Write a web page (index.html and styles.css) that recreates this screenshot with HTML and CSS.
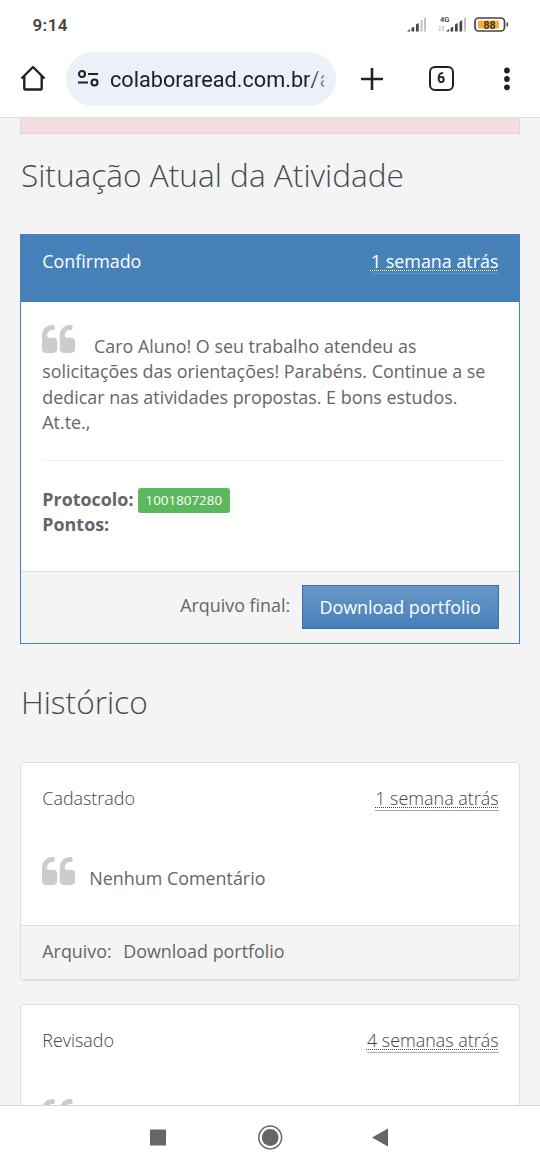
FILE: index.html
```html
<!DOCTYPE html>
<html lang="pt-BR">
<head>
<meta charset="utf-8">
<title>Situação Atual da Atividade</title>
<link rel="stylesheet" href="styles.css">
</head>
<body>
<svg class="defs" width="0" height="0">
  <symbol id="quote" viewBox="0 128 1664 1408">
    <path id="mark" d="M768 960v384q0 80-56 136t-136 56h-384q-80 0-136-56t-56-136v-704q0-104 40.500-198.500t109.500-163.500 163.500-109.500 198.500-40.500h64q26 0 45 19t19 45v128q0 26-19 45t-45 19h-64q-106 0-181 75t-75 181v32q0 40 28 68t68 28h224q80 0 136 56t56 136z"/>
    <use href="#mark" x="896"/>
  </symbol>
</svg>
<div class="screen">
  <header class="status">
    <span class="clock">9:14</span>
    <svg class="indicators" width="104" height="24" viewBox="0 0 104 24">
      <g fill="#444">
        <path d="M1 20.500l3-2.500v2.500zM5.500 17l2.700-1.500v5h-2.700zM10 13.500l2.700-1.500v8.500h-2.700z"/>
        <path d="M40 20.500l3-2.500v2.500zM44.500 17l2.700-1.500v5h-2.700zM49 13.500l2.700-1.500v8.500h-2.700zM53.500 11l2.700-2v11.500h-2.700z"/>
      </g>
      <path fill="#c2c2c2" d="M14.500 10l2-1.500v12h-2zM18 7.500l2-1.500v14.500h-2zM58 7.500l2-1.500v14.500h-2z"/>
      <path fill="none" stroke="#aaa" stroke-width=".8" d="M34 15v5l-1.500-1.500M37 20v-5l1.500 1.500"/>
      <text class="net" x="34" y="11">4G</text>
      <rect x="69" y="7" width="29.500" height="13" rx="3.500" fill="#fff" stroke="#444" stroke-width="1.700"/>
      <rect x="72" y="9.500" width="21" height="8" rx="1" fill="#f1ad43"/>
      <path fill="#444" d="M100.500 11.500h1.500v4h-1.500z"/>
      <text class="charge" x="83.500" y="17.600" text-anchor="middle">88</text>
    </svg>
  </header>
  <nav class="toolbar">
    <svg class="home" width="26" height="28" viewBox="0 0 26 28" fill="none" stroke="#202124" stroke-width="2.400">
      <path d="M1.500 14.500L13 3l11.500 11.500" stroke-linejoin="round"/><path d="M4.300 12v12.500q0 1 1 1h15.400q1 0 1-1v-12.500"/>
    </svg>
    <div class="address">
      <svg width="22" height="20" viewBox="0 0 22 20" fill="none" stroke="#202124" stroke-width="2.100">
        <circle cx="5" cy="5" r="3"/><path d="M11 5h10M1 13.500h10"/><circle cx="17.500" cy="13.500" r="3"/>
      </svg>
      <span class="url">colaboraread.com.br/a</span>
    </div>
    <svg class="plus" width="24" height="24" viewBox="0 0 24 24" stroke="#202124" stroke-width="2.600"><path d="M1 12h22M12 1v22"/></svg>
    <span class="tabs">6</span>
    <svg class="more" width="8" height="24" viewBox="0 0 8 24" fill="#202124"><circle cx="4" cy="3.500" r="2.900"/><circle cx="4" cy="12" r="2.900"/><circle cx="4" cy="20.300" r="2.900"/></svg>
  </nav>
  <main class="page">
    <div class="alert"></div>
    <h1 class="title">Situação Atual da Atividade</h1>
    <section class="panel current">
      <div class="head"><span>Confirmado</span><abbr class="time">1 semana atrás</abbr></div>
      <div class="body">
        <p class="comment"><svg class="quote"><use href="#quote"/></svg>Caro Aluno! O seu trabalho atendeu as solicitações das orientações! Parabéns. Continue a se dedicar nas atividades propostas. E bons estudos. At.te.,</p>
        <hr class="rule">
        <div class="facts"><b>Protocolo:</b><span class="label">1001807280</span></div>
        <div class="facts"><b>Pontos:</b></div>
      </div>
      <div class="foot"><span>Arquivo final:</span><a class="button">Download portfolio</a></div>
    </section>
    <h2 class="title second">Histórico</h2>
    <section class="panel past">
      <div class="head"><span>Cadastrado</span><abbr class="time">1 semana atrás</abbr></div>
      <p class="comment none"><svg class="quote"><use href="#quote"/></svg>Nenhum Comentário</p>
      <div class="foot"><span>Arquivo:</span><a>Download portfolio</a></div>
    </section>
    <section class="panel past">
      <div class="head"><span>Revisado</span><abbr class="time">4 semanas atrás</abbr></div>
      <p class="comment none"><svg class="quote"><use href="#quote"/></svg></p>
    </section>
  </main>
  <footer class="system">
    <svg width="240" height="26" viewBox="0 0 240 26" fill="#666">
      <rect x="0" y="5.500" width="16" height="16" rx=".6"/>
      <circle cx="120.200" cy="13.500" r="11.400" fill="#fff" stroke="#666" stroke-width="1.500"/><circle cx="120.200" cy="13.500" r="8.400"/>
      <path d="M222 13.500l16-9v18z"/>
    </svg>
  </footer>
</div>
</body>
</html>
```
FILE: styles.css
```css
* { box-sizing: border-box; }
body { margin: 0; background: #fff; font: 17.9px/25.6px "Open Sans", sans-serif; color: #666; }
.defs { position: absolute; }
.screen { width: 540px; height: 1170px; display: flex; flex-direction: column; overflow: hidden; }
.status { height: 52px; flex: none; display: flex; justify-content: space-between; padding: 11px 30px 0 32.5px; font-family: Roboto, sans-serif; }
.clock { font-size: 17px; line-height: 28px; font-weight: 600; letter-spacing: .4px; color: #444; }
.net { font: 500 7.5px Roboto, sans-serif; fill: #333; }
.charge { font: 700 10.5px Roboto, sans-serif; fill: #4b3510; }
.toolbar { height: 65px; flex: none; display: flex; align-items: flex-start; padding-left: 20px; font-family: Roboto, sans-serif; color: #202124; }
.home { margin-top: 12px; }
.address { width: 270px; height: 54px; margin-left: 20px; border-radius: 27px; background: #ebf0f9; display: flex; align-items: center; padding-left: 11px; }
.url { width: 218px; margin: 2px 0 0 11px; white-space: nowrap; font-size: 21.7px; line-height: 30px; -webkit-mask-image: linear-gradient(90deg, #000 90%, rgba(0,0,0,.45) 98%, transparent 98.5%); }
.plus { margin: 15px 0 0 24px; }
.tabs { width: 25px; height: 25px; margin: 14px 0 0 44.5px; border: 2.5px solid #202124; border-radius: 6px; text-align: center; font-size: 14px; font-weight: 700; line-height: 21px; }
.more { margin: 15px 0 0 49px; }
.page { flex: 1; min-height: 0; overflow: hidden; background: #f4f4f4; border-top: 1px solid #ddd; padding: 0 20px; }
.alert { height: 16px; background: #f2dede; border: 1px solid #e8d0d3; border-top: 0; }
.title { margin: 19px 0 38px 1px; font-size: 31.6px; line-height: 43px; font-weight: 300; color: #484b52; }
.second { margin: 36px 0 39px 1px; }
.panel { background: #fff; border: 1px solid #ddd; }
.head { display: flex; justify-content: space-between; }
.time { text-decoration: underline dotted 1.2px; text-decoration-skip-ink: none; text-underline-offset: 2px; border-bottom: 1px solid #aaa; height: 25px; }
.current { border-color: #4781ba; }
.current .head { height: 67px; background: #4781ba; color: #fff; padding: 14px 20.5px 0 21.3px; }
.current .time { border-color: #6393c3; }
.body { height: 269px; padding: 22.5px 16px 0 21.3px; }
.comment { margin: 0; }
.quote { width: 33px; height: 28px; margin-right: 18.7px; fill: #ccc; vertical-align: baseline; }
.rule { margin: 24.5px 0 25.2px; border: 0; border-top: 1px solid #eee; }
.facts { display: flex; height: 25.6px; }
.label { margin: 1px 0 0 4px; height: 25px; padding: 0 8px; border-radius: 3px; background: #5cb85c; color: #fff; font-size: 13.4px; line-height: 24px; }
.foot { border-top: 1px solid #ddd; background: #f4f4f4; display: flex; align-items: center; }
.current .foot { height: 72px; padding: 0 20.5px; justify-content: flex-end; gap: 11.5px; }
.current .foot span { margin-top: -4px; }
.button { height: 44px; margin-top: -1px; padding: 0 16.700px; border: 1px solid #3b6fa3; background: linear-gradient(#6797c7, #4781ba); color: #fff; line-height: 42px; }
.past { height: 218px; border-radius: 4px; box-shadow: 0 1px 1px rgba(0,0,0,.06); margin-bottom: 24px; overflow: hidden; }
.past .head { height: 94px; padding: 23px 20.5px 0 21.3px; font-weight: 300; color: #444; }
.none { height: 68px; padding-left: 21.3px; }
.none .quote { margin-right: 14px; }
.past .foot { height: 54px; padding: 0 21.3px 2px; gap: 11.5px; }
.system { flex: none; height: 65px; border-top: 1px solid #d7d7d7; display: flex; justify-content: center; padding-top: 18px; }
```
